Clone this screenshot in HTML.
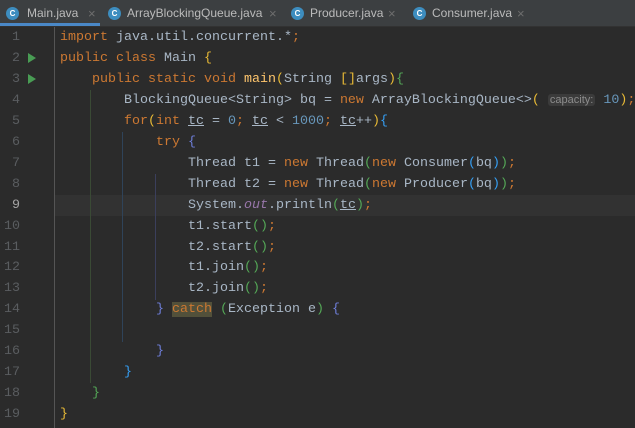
<!DOCTYPE html>
<html><head><meta charset="utf-8"><style>
body{margin:0;width:635px;height:428px;background:#2b2b2b;overflow:hidden;position:relative;font-family:"Liberation Mono",monospace}
#tabs{position:absolute;left:0;top:0;width:635px;height:27px;background:#3c3f41;border-bottom:1px solid #323232;box-sizing:border-box}
.tab{position:absolute;top:0;height:24px;font:12px "Liberation Sans",sans-serif;color:#bbbbbb;line-height:27px;white-space:nowrap}
.ic{position:absolute;top:7px;width:13px;height:13px;border-radius:50%;background:#3d8dbf;color:#fff;font:bold 8px "Liberation Sans",sans-serif;text-align:center;line-height:13px}
.x{position:absolute;top:0;color:#6e6e6e;font-size:13px}
#ul{position:absolute;left:0;top:23px;width:100px;height:3px;background:#4a88c7}
.ln{position:absolute;left:0;width:20px;text-align:right;color:#5a5d60;font-size:13.33px}
.code{position:absolute;left:60px;white-space:pre;font-size:13.33px;color:#a9b7c6}
.k{color:#cc7832}.n{color:#6897bb}.y{color:#e8ba36}.g{color:#54a857}.b{color:#359ff4}.p{color:#6e7ed9}
.u{text-decoration:underline}.o{color:#9876aa;font-style:italic}
.hint{background:#3b3b3b;color:#8c8c8c;font-family:"Liberation Sans",sans-serif;font-size:11px;border-radius:3px;padding:0 2px}
.guide{position:absolute;width:1px}
.run{position:absolute;left:28px;width:0;height:0;border-left:8px solid #499c54;border-top:5px solid transparent;border-bottom:5px solid transparent}
</style></head><body>
<div id="tabs">
<div class="tab" style="left:5px"><span class="ic" style="left:1px">C</span><span style="position:absolute;left:22px">Main.java</span><span class="x" style="left:83px">×</span></div>
<div class="tab" style="left:108px"><span class="ic" style="left:0">C</span><span style="position:absolute;left:19px">ArrayBlockingQueue.java</span><span class="x" style="left:161px">×</span></div>
<div class="tab" style="left:291px"><span class="ic" style="left:0">C</span><span style="position:absolute;left:19px">Producer.java</span><span class="x" style="left:97px">×</span></div>
<div class="tab" style="left:413px"><span class="ic" style="left:0">C</span><span style="position:absolute;left:19px">Consumer.java</span><span class="x" style="left:104px">×</span></div>
<div id="ul"></div>
</div>
<div style="position:absolute;left:55px;top:195px;width:580px;height:21px;background:#323232"></div>
<div style="position:absolute;left:54px;top:27px;width:1px;height:401px;background:#555"></div>
<div class="guide" style="left:90px;top:90px;height:293px;background:#3a4a35"></div>
<div class="guide" style="left:122px;top:132px;height:210px;background:#2f4359"></div>
<div class="guide" style="left:155px;top:174px;height:126px;background:#3b3f5c"></div>
<div class="run" style="top:53px"></div><div class="run" style="top:74px"></div>
<div id="lines"></div>
<script>
var L=[
'<span class="k">import</span> java.util.concurrent.*<span class="k">;</span>',
'<span class="k">public class</span> Main <span class="y">{</span>',
'    <span class="k">public static void</span> <span style="color:#ffc66d">main</span><span class="y">(</span>String <span class="y">[]</span>args<span class="y">)</span><span class="g">{</span>',
'        BlockingQueue&lt;String&gt; bq = <span class="k">new</span> ArrayBlockingQueue&lt;&gt;<span class="y">(</span> <span class="hint">capacity:</span> <span class="n">10</span><span class="y">)</span><span class="k">;</span>',
'        <span class="k">for</span><span class="y">(</span><span class="k">int</span> <span class="u">tc</span> = <span class="n">0</span><span class="k">;</span> <span class="u">tc</span> &lt; <span class="n">1000</span><span class="k">;</span> <span class="u">tc</span>++<span class="y">)</span><span class="b">{</span>',
'            <span class="k">try</span> <span class="p">{</span>',
'                Thread t1 = <span class="k">new</span> Thread<span class="g">(</span><span class="k">new</span> Consumer<span class="b">(</span>bq<span class="b">)</span><span class="g">)</span><span class="k">;</span>',
'                Thread t2 = <span class="k">new</span> Thread<span class="g">(</span><span class="k">new</span> Producer<span class="b">(</span>bq<span class="b">)</span><span class="g">)</span><span class="k">;</span>',
'                System.<span class="o">out</span>.println<span class="g">(</span><span class="u">tc</span><span class="g">)</span><span class="k">;</span>',
'                t1.start<span class="g">()</span><span class="k">;</span>',
'                t2.start<span class="g">()</span><span class="k">;</span>',
'                t1.join<span class="g">()</span><span class="k">;</span>',
'                t2.join<span class="g">()</span><span class="k">;</span>',
'            <span class="p">}</span> <span class="k" style="background:#52503a">catch</span> <span class="g">(</span>Exception e<span class="g">)</span> <span class="p">{</span>',
'',
'            <span class="p">}</span>',
'        <span class="b">}</span>',
'    <span class="g">}</span>',
'<span class="y">}</span>'];
var h='';for(var i=0;i<L.length;i++){var t=27+i*20.95;h+='<div class="ln" style="top:'+t+'px;line-height:21px;'+(i==8?'color:#a4a3a3':'')+'">'+(i+1)+'</div><div class="code" style="top:'+t+'px;line-height:21px">'+L[i]+'</div>';}
document.getElementById('lines').innerHTML=h;
</script>
</body></html>
